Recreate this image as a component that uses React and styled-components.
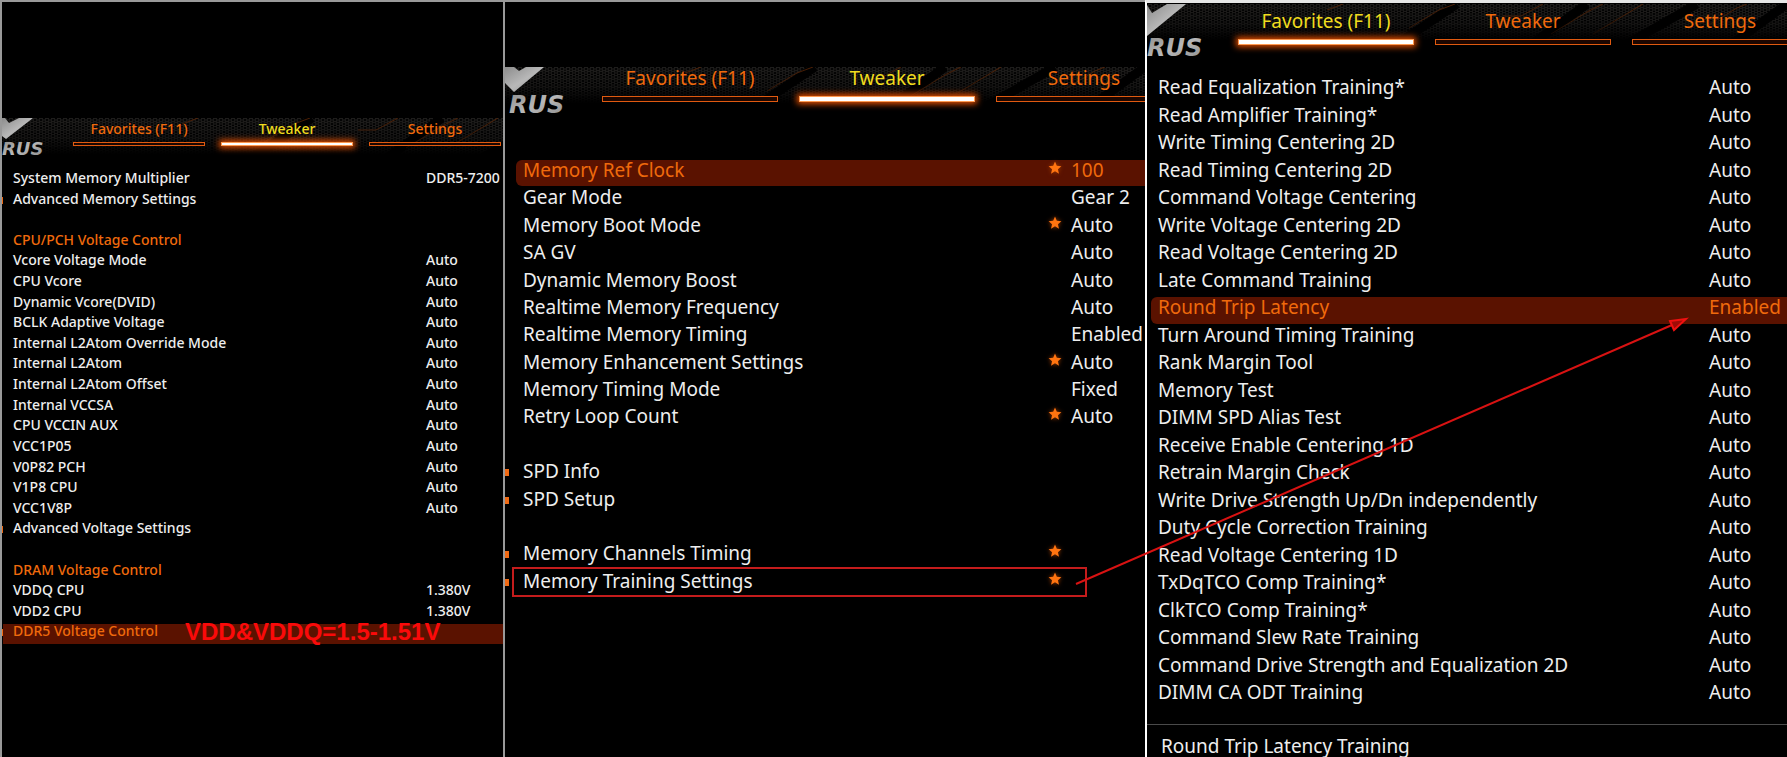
import React from 'react';
import styled, { createGlobalStyle, css, ThemeProvider } from 'styled-components';

const GlobalStyle = createGlobalStyle`
  * {
    box-sizing: border-box;
  }

  body {
    margin: 0;
    background: #000;
    color: #eee;
    font-family: 'Noto Sans', 'Open Sans', sans-serif;
  }
`;

// -----------------------------------------
// Sizes: the small panel and the two large ones
const small = {
  font: 14,
  weight: 500,
  line: 13,
  tabLine: 22,
  tabWidth: 132,
  tabGap: 16,
  tabSpace: 2,
  barHeight: 4,
  markerTop: 5,
  logoFont: 18,
};

const large = {
  font: 19,
  weight: 400,
  line: 20,
  tabLine: 22,
  tabWidth: 176,
  tabGap: 21,
  tabSpace: 7,
  barHeight: 6,
  markerTop: 8,
  logoFont: 24,
};

// -----------------------------------------
// Data
const voltageRows = [
  { label: 'System Memory Multiplier', value: 'DDR5-7200' },
  { label: 'Advanced Memory Settings', menu: true },
  null,
  { label: 'CPU/PCH Voltage Control', title: true },
  { label: 'Vcore Voltage Mode', value: 'Auto' },
  { label: 'CPU Vcore', value: 'Auto' },
  { label: 'Dynamic Vcore(DVID)', value: 'Auto' },
  { label: 'BCLK Adaptive Voltage', value: 'Auto' },
  { label: 'Internal L2Atom Override Mode', value: 'Auto' },
  { label: 'Internal L2Atom', value: 'Auto' },
  { label: 'Internal L2Atom Offset', value: 'Auto' },
  { label: 'Internal VCCSA', value: 'Auto' },
  { label: 'CPU VCCIN AUX', value: 'Auto' },
  { label: 'VCC1P05', value: 'Auto' },
  { label: 'V0P82 PCH', value: 'Auto' },
  { label: 'V1P8 CPU', value: 'Auto' },
  { label: 'VCC1V8P', value: 'Auto' },
  { label: 'Advanced Voltage Settings', menu: true },
  null,
  { label: 'DRAM Voltage Control', title: true },
  { label: 'VDDQ CPU', value: '1.380V' },
  { label: 'VDD2 CPU', value: '1.380V' },
  { label: 'DDR5 Voltage Control', menu: true, selected: true, note: 'VDD&VDDQ=1.5-1.51V' },
];

const memoryRows = [
  { label: 'Memory Ref Clock', value: '100', star: true, selected: true },
  { label: 'Gear Mode', value: 'Gear 2' },
  { label: 'Memory Boot Mode', value: 'Auto', star: true },
  { label: 'SA GV', value: 'Auto' },
  { label: 'Dynamic Memory Boost', value: 'Auto' },
  { label: 'Realtime Memory Frequency', value: 'Auto' },
  { label: 'Realtime Memory Timing', value: 'Enabled' },
  { label: 'Memory Enhancement Settings', value: 'Auto', star: true },
  { label: 'Memory Timing Mode', value: 'Fixed' },
  { label: 'Retry Loop Count', value: 'Auto', star: true },
  null,
  { label: 'SPD Info', menu: true },
  { label: 'SPD Setup', menu: true },
  null,
  { label: 'Memory Channels Timing', menu: true, star: true },
  { label: 'Memory Training Settings', menu: true, star: true, framed: true },
];

const trainingRows = [
  { label: 'Read Equalization Training*', value: 'Auto' },
  { label: 'Read Amplifier Training*', value: 'Auto' },
  { label: 'Write Timing Centering 2D', value: 'Auto' },
  { label: 'Read Timing Centering 2D', value: 'Auto' },
  { label: 'Command Voltage Centering', value: 'Auto' },
  { label: 'Write Voltage Centering 2D', value: 'Auto' },
  { label: 'Read Voltage Centering 2D', value: 'Auto' },
  { label: 'Late Command Training', value: 'Auto' },
  { label: 'Round Trip Latency', value: 'Enabled', selected: true },
  { label: 'Turn Around Timing Training', value: 'Auto' },
  { label: 'Rank Margin Tool', value: 'Auto' },
  { label: 'Memory Test', value: 'Auto' },
  { label: 'DIMM SPD Alias Test', value: 'Auto' },
  { label: 'Receive Enable Centering 1D', value: 'Auto' },
  { label: 'Retrain Margin Check', value: 'Auto' },
  { label: 'Write Drive Strength Up/Dn independently', value: 'Auto' },
  { label: 'Duty Cycle Correction Training', value: 'Auto' },
  { label: 'Read Voltage Centering 1D', value: 'Auto' },
  { label: 'TxDqTCO Comp Training*', value: 'Auto' },
  { label: 'ClkTCO Comp Training*', value: 'Auto' },
  { label: 'Command Slew Rate Training', value: 'Auto' },
  { label: 'Command Drive Strength and Equalization 2D', value: 'Auto' },
  { label: 'DIMM CA ODT Training', value: 'Auto' },
];

// -----------------------------------------
// Page and panels
const Page = styled.main`
  position: relative;
  display: grid;
  grid-template-columns: 503fr 642fr 642fr;
  min-height: 100vh;
  overflow: hidden;
`;

const Panel = styled.section`
  display: flex;
  flex-direction: column;
  min-width: 0;
  overflow: hidden;
  padding-top: ${(props) => props.$top}px;
  border-left: 2px solid ${(props) => props.$edge};
  border-top: ${(props) => props.$edgeTop};
`;

// -----------------------------------------
// Header
const Header = styled.header`
  position: relative;
  display: flex;
  height: ${(props) => props.$height}px;
`;

const Backdrop = styled.svg`
  position: absolute;
  top: 0;
  left: 0;
  width: 100%;
  height: 40px;
`;

const Logo = styled.svg`
  position: relative;
  flex: none;
  width: ${(props) => props.$width}px;
  height: 56px;
`;

const Tabs = styled.nav`
  position: relative;
  display: flex;
  gap: ${({ theme }) => theme.tabGap}px;
  padding-top: ${(props) => props.$top}px;
`;

const Tab = styled.button`
  display: flex;
  flex: none;
  flex-direction: column;
  justify-content: flex-start;
  align-items: stretch;
  gap: ${({ theme }) => theme.tabSpace}px;
  width: ${({ theme }) => theme.tabWidth}px;
  padding: 0;
  border: 0;
  background: none;
  color: ${(props) => (props.$active ? '#f0dc1e' : '#f06a0c')};
  font-family: inherit;
  font-size: ${({ theme }) => theme.font}px;
  font-weight: ${({ theme }) => theme.weight};
  line-height: ${({ theme }) => theme.tabLine}px;
  text-align: center;
  cursor: pointer;
`;

const TabBar = styled.span`
  height: ${({ theme }) => theme.barHeight}px;
  border: 1px solid #e05a10;
  background: #1c0600;

  ${(props) =>
    props.$active &&
    css`
      border-color: #ff9a50;
      background: #fff;
      box-shadow: 0 0 6px 2px #e85000;
    `}
`;

// -----------------------------------------
// Rows
const List = styled.ul`
  display: grid;
  grid-auto-rows: 1fr;
  height: ${(props) => props.$height}px;
  margin: 0;
  padding: 0;
  list-style: none;
  font-size: ${({ theme }) => theme.font}px;
  font-weight: ${({ theme }) => theme.weight};
  line-height: ${({ theme }) => theme.line}px;
  white-space: nowrap;
`;

const Row = styled.li`
  position: relative;
  display: grid;
  grid-template-columns: ${(props) => props.$indent}px 1fr;
`;

const Marker = styled.span`
  width: ${(props) => props.$width}px;
  height: 7px;
  margin-top: ${({ theme }) => theme.markerTop}px;
  background: ${(props) => (props.$on ? '#f06a14' : 'transparent')};
`;

const Body = styled.div`
  display: grid;
  grid-template-columns: 1fr 23px ${(props) => props.$valueWidth}px;
  margin-bottom: 1px;
  padding-left: ${(props) => props.$pad}px;
  border-radius: ${(props) => props.$radius}px 0 0 ${(props) => props.$radius}px;
  color: ${(props) => (props.$selected || props.$title ? '#f06a0c' : '#eee')};
  background: ${(props) => (props.$selected ? '#5a1200' : 'none')};
`;

const Label = styled.span`
  min-width: 0;
`;

const Star = styled.svg`
  width: 14px;
  height: 14px;
  margin-top: 1px;
  filter: drop-shadow(0 0 2px #a03c00);
`;

const Value = styled.span`
  grid-column: 3;
`;

const Note = styled.strong`
  position: absolute;
  top: -5px;
  left: 183px;
  color: #fa0a0a;
  font-family: 'Liberation Sans', Arial, sans-serif;
  font-size: 24px;
  line-height: 26px;
`;

// Red frame round a whole entry
const Frame = styled.span`
  position: absolute;
  top: -4px;
  right: 58px;
  bottom: 1px;
  left: 7px;
  border: 2px solid #c41c1c;
`;

const Help = styled.footer`
  margin-top: 14px;
  padding: 11px 0 0 14px;
  border-top: 1px solid #4a4a4a;
  font-size: ${({ theme }) => theme.font}px;
  line-height: ${({ theme }) => theme.line}px;
`;

const Arrow = styled.svg`
  position: absolute;
  top: 0;
  left: 0;
  width: 100%;
  height: 100%;
  pointer-events: none;
`;

// -----------------------------------------
const HexBackdrop = ({ id }) => (
  <Backdrop aria-hidden="true">
    <defs>
      <pattern id={`hex-${id}`} width="6" height="8" patternUnits="userSpaceOnUse">
        <path
          d="M3 0 L5 1 V3 L3 4 L1 3 V1 Z M0 4 L2 5 V7 L0 8 M6 4 L4 5 V7 L6 8"
          fill="#050505"
          stroke="#2c2a28"
          strokeWidth="1"
        />
      </pattern>
      <linearGradient id={`fade-${id}`} x1="0" y1="0" x2="0" y2="1">
        <stop offset="0" stopColor="#000" stopOpacity="0.1" />
        <stop offset="0.5" stopColor="#000" stopOpacity="0.4" />
        <stop offset="0.9" stopColor="#000" />
      </linearGradient>
    </defs>
    <rect width="100%" height="40" fill={`url(#hex-${id})`} />
    <g fill="none" stroke="#000" strokeWidth="9">
      <path d="M250 40 L310 0 M385 40 L440 0 M480 40 L550 0 M585 40 L640 0" />
    </g>
    <g fill="none" stroke="#6a2c08" strokeWidth="1" opacity="0.8">
      <path d="M180 6 L196 0 M262 24 L292 6 L308 0 M356 12 L374 12 L396 0 M404 30 L440 8 L456 0 M446 30 L496 0 M560 22 L590 4 L600 0" />
    </g>
    <rect width="100%" height="40" fill={`url(#fade-${id})`} />
  </Backdrop>
);

const Brand = ({ id, width, shield, textX, textY, fontSize }) => (
  <Logo $width={width} role="img" aria-label="AORUS">
    <defs>
      <linearGradient id={`metal-${id}`} x1="0" y1="0" x2="1" y2="1">
        <stop offset="0" stopColor="#8c8c8c" />
        <stop offset="0.5" stopColor="#b8b8b8" />
        <stop offset="1" stopColor="#8a8a8a" />
      </linearGradient>
    </defs>
    <path d={shield} fill={`url(#metal-${id})`} />
    <text
      x={textX}
      y={textY}
      fill={`url(#metal-${id})`}
      fontFamily="DejaVu Sans"
      fontSize={fontSize}
      fontWeight="700"
      fontStyle="italic"
    >
      RUS
    </text>
  </Logo>
);

const TabList = ({ active, top }) => (
  <Tabs $top={top}>
    {['Favorites (F11)', 'Tweaker', 'Settings'].map((name) => (
      <Tab key={name} type="button" $active={name === active}>
        {name}
        <TabBar $active={name === active} />
      </Tab>
    ))}
  </Tabs>
);

const Settings = ({ rows, height, indent, pad, radius, marker, valueWidth }) => (
  <List $height={height}>
    {rows.map((row, i) =>
      row ? (
        <Row key={row.label} $indent={indent}>
          <Marker $width={marker} $on={row.menu} />
          <Body
            $pad={pad}
            $radius={radius}
            $valueWidth={valueWidth}
            $selected={row.selected}
            $title={row.title}
          >
            <Label>{row.label}</Label>
            {row.star && (
              <Star viewBox="0 0 14 14" aria-hidden="true">
                <path
                  d="M7 0.5 L8.8 4.8 L13.4 5.2 L9.9 8.2 L11 12.8 L7 10.3 L3 12.8 L4.1 8.2 L0.6 5.2 L5.2 4.8 Z"
                  fill="#ff7410"
                />
              </Star>
            )}
            <Value>{row.value}</Value>
          </Body>
          {row.note && <Note>{row.note}</Note>}
          {row.framed && <Frame />}
        </Row>
      ) : (
        <Row key={i} $indent={indent} aria-hidden="true" />
      )
    )}
  </List>
);

const App = () => (
  <>
    <GlobalStyle />
    <Page>
      {/* Voltages */}
      <ThemeProvider theme={small}>
        <Panel $top={116} $edge="#999" $edgeTop="2px solid #999">
          <Header $height={53}>
            <HexBackdrop id="voltage" />
            <Brand
              id="voltage"
              width={71}
              shield="M0 0 H3 L7 5 L17 0 H31 L4 21 L0 18 Z"
              textX={0}
              textY={37}
              fontSize={small.logoFont}
            />
            <TabList active="Tweaker" top={0} />
          </Header>
          <Settings
            rows={voltageRows}
            height={474}
            indent={1}
            pad={10}
            radius={0}
            marker={1}
            valueWidth={77}
          />
        </Panel>
      </ThemeProvider>

      {/* Memory */}
      <ThemeProvider theme={large}>
        <Panel $top={65} $edge="#999" $edgeTop="2px solid #999">
          <Header $height={93}>
            <HexBackdrop id="memory" />
            <Brand
              id="memory"
              width={97}
              shield="M0 0 H9 L14 4 L21 0 H39 L9 25 L0 16 Z"
              textX={4}
              textY={46}
              fontSize={large.logoFont}
            />
            <TabList active="Tweaker" top={0} />
          </Header>
          <Settings
            rows={memoryRows}
            height={438}
            indent={11}
            pad={7}
            radius={6}
            marker={4}
            valueWidth={74}
          />
        </Panel>

        {/* Training */}
        <Panel $top={1} $edge="#fff" $edgeTop="3px solid #e6e6e6">
          <Header $height={73}>
            <HexBackdrop id="training" />
            <Brand
              id="training"
              width={91}
              shield="M0 1 L5 9 L20 0 H39 L0 32 Z"
              textX={0}
              textY={52}
              fontSize={large.logoFont}
            />
            <TabList active="Favorites (F11)" top={6} />
          </Header>
          <Settings
            rows={trainingRows}
            height={633}
            indent={4}
            pad={7}
            radius={6}
            marker={0}
            valueWidth={78}
          />
          <Help>Round Trip Latency Training</Help>
        </Panel>
      </ThemeProvider>

      {/* From the training menu to the option inside it */}
      <Arrow aria-hidden="true">
        <line x1="1076" y1="584" x2="1672" y2="325" stroke="#d81212" strokeWidth="2" />
        <path d="M1686 319 L1670 321 L1674 330 Z" fill="#a00c06" stroke="#f01010" strokeWidth="2" />
      </Arrow>
    </Page>
  </>
);

export default App;
